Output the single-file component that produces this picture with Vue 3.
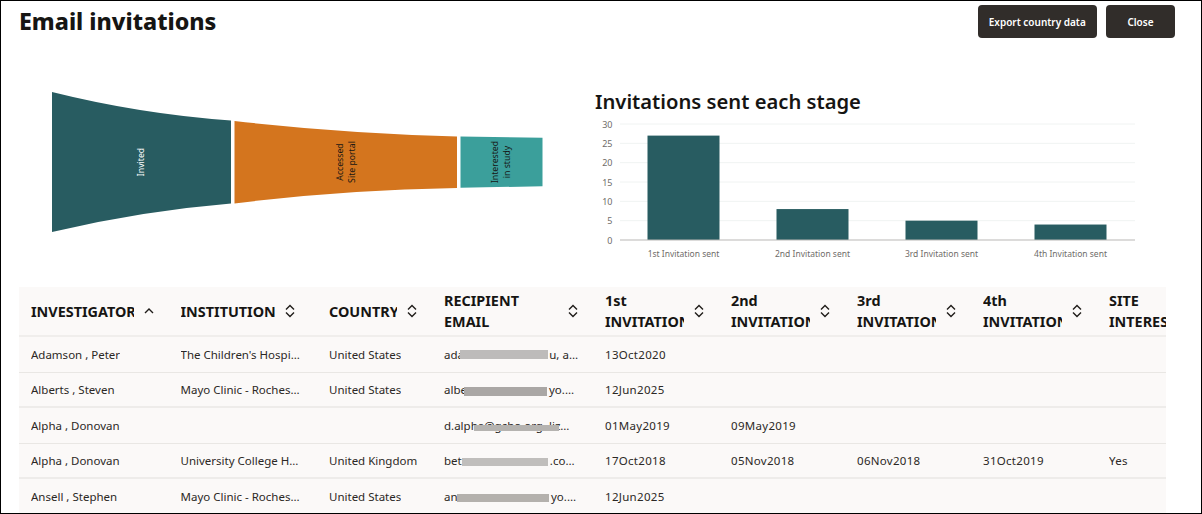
<script setup>
const columns = [
  { lines: ['INVESTIGATOR'], width: 149.5, sort: 'asc' },
  { lines: ['INSTITUTION'], width: 148.5, sort: 'both', wide: true },
  { lines: ['COUNTRY'], width: 115, sort: 'both' },
  { lines: ['RECIPIENT', 'EMAIL'], width: 161, sort: 'both' },
  { lines: ['1st', 'INVITATION'], width: 126, sort: 'both' },
  { lines: ['2nd', 'INVITATION'], width: 126, sort: 'both' },
  { lines: ['3rd', 'INVITATION'], width: 126, sort: 'both' },
  { lines: ['4th', 'INVITATION'], width: 126, sort: 'both' },
  { lines: ['SITE', 'INTEREST'], width: 100, sort: '' },
]
const rows = [
  { c: ['Adamson , Peter', "The Children's Hospital", 'United States', '', '13Oct2020', '', '', '', ''],
    email: { pre: 'ada', suf: 'u, a…', end: 134 }, mask: { from: 16, to: 104, top: 13, h: 9, color: '#bdbbba' } },
  { c: ['Alberts , Steven', 'Mayo Clinic - Rochester', 'United States', '', '12Jun2025', '', '', '', ''],
    email: { pre: 'albe', suf: 'yo.…', end: 130 }, mask: { from: 20, to: 102.500, top: 14.500, h: 9, color: '#aaa7a5' } },
  { c: ['Alpha , Donovan', '', '', '', '01May2019', '09May2019', '', '', ''],
    email: { pre: 'd.alpha@gcho.org, liz…', suf: '', end: 129 }, mask: { from: 30, to: 115, top: 17, h: 6, color: '#b5b3b0' } },
  { c: ['Alpha , Donovan', 'University College Hospital', 'United Kingdom', '', '17Oct2018', '05Nov2018', '06Nov2018', '31Oct2019', 'Yes'],
    email: { pre: 'bet', suf: '.co…', end: 130.500 }, mask: { from: 18, to: 104, top: 14, h: 8, color: '#c0bebc' } },
  { c: ['Ansell , Stephen', 'Mayo Clinic - Rochester', 'United States', '', '12Jun2025', '', '', '', ''],
    email: { pre: 'an', suf: 'yo.…', end: 132 }, mask: { from: 13, to: 105, top: 14.500, h: 8, color: '#b4b1ad' } },
]
const ticks = [30, 25, 20, 15, 10, 5, 0]
const bars = [
  { label: '1st Invitation sent', value: 27 },
  { label: '2nd Invitation sent', value: 8 },
  { label: '3rd Invitation sent', value: 5 },
  { label: '4th Invitation sent', value: 4 },
]
const yOf = (v) => 240 - (v / 30) * 116
</script>

<template>
  <div class="page">
    <header class="top">
      <h1>Email invitations</h1>
      <div class="actions">
        <button class="btn export">Export country data</button>
        <button class="btn close">Close</button>
      </div>
    </header>

    <section class="charts">
      <svg class="funnel" width="560" height="160" viewBox="0 80 560 160">
        <path d="M52 92 Q140 114 231 120.5 L231 203.5 Q140 211 52 232 Z" fill="#285c61" />
        <path d="M234.500 121 Q340 133 457 136.500 L457 188 Q340 190 234.500 203.500 Z" fill="#d4751e" />
        <path d="M460.500 136.500 L542.500 137.700 L542.500 186.300 L460.500 187.700 Z" fill="#3b9f9b" />
        <text class="fl white" transform="translate(144 162) rotate(-90)" text-anchor="middle">Invited</text>
        <text class="fl" transform="translate(342.500 162) rotate(-90)" text-anchor="middle">Accessed</text>
        <text class="fl" transform="translate(355 162) rotate(-90)" text-anchor="middle">Site portal</text>
        <text class="fl" transform="translate(498 162) rotate(-90)" text-anchor="middle">Interested</text>
        <text class="fl" transform="translate(510 162) rotate(-90)" text-anchor="middle">in study</text>
      </svg>

      <div class="bar-panel">
        <h2>Invitations sent each stage</h2>
        <svg class="bars" width="560" height="156" viewBox="590 114 560 156">
          <g v-for="t in ticks" :key="t">
            <line v-if="t" x1="620" x2="1135" :y1="yOf(t)" :y2="yOf(t)" stroke="#f0f3f2" stroke-width="1" />
            <text class="tick" x="612.500" :y="yOf(t) + 3.500" text-anchor="end">{{ t }}</text>
          </g>
          <g v-for="(b, i) in bars" :key="b.label">
            <rect :x="647.500 + i * 129" :y="yOf(b.value)" width="72" :height="240 - yOf(b.value)" fill="#285c61" />
            <text class="tick lab" :x="683.500 + i * 129" y="256.500" text-anchor="middle">{{ b.label }}</text>
          </g>
          <line x1="620" x2="1135" y1="240" y2="240" stroke="#b9b7b5" stroke-width="1" />
        </svg>
      </div>
    </section>

    <section class="table">
      <div class="row head">
        <div v-for="col in columns" :key="col.lines[0]" class="cell hcell" :class="{ wide: col.wide }" :style="{ width: col.width + 'px' }">
          <div class="htext"><span v-for="l in col.lines" :key="l">{{ l }}</span></div>
          <svg v-if="col.sort" class="sort" width="10" height="14" viewBox="0 0 10 14" fill="none" stroke="#1f1c1a" stroke-width="1.4">
            <path v-if="col.sort === 'asc'" d="M1 9 L5 5 L9 9" />
            <template v-else>
              <path d="M1 5.500 L5 1.500 L9 5.500" />
              <path d="M1 8.500 L5 12.500 L9 8.500" />
            </template>
          </svg>
        </div>
      </div>
      <div v-for="(r, i) in rows" :key="i" class="row body">
        <div v-for="(v, j) in r.c" :key="j" class="cell" :class="{ date: j >= 4, loose: j === 2 }" :style="{ width: columns[j].width + 'px' }">
          <span v-if="j !== 3" class="val">{{ v }}</span>
          <template v-else>
            <span class="email" :style="{ width: r.email.end + 'px' }">
              <span>{{ r.email.pre }}</span><span>{{ r.email.suf }}</span>
            </span>
            <i class="mask" :style="{ left: 12 + r.mask.from + 'px', width: r.mask.to - r.mask.from + 'px', top: r.mask.top + 'px', height: r.mask.h + 'px', background: r.mask.color }"></i>
          </template>
        </div>
      </div>
    </section>
  </div>
</template>

<style scoped>
.page {
  box-sizing: border-box;
  width: 1202px;
  height: 514px;
  border: 1px solid #000;
  background: #fff;
  color: #161513;
  font-family: "Noto Sans", sans-serif;
  overflow: hidden;
  padding: 4px 26px 0 18px;
}
.top {
  display: flex;
  justify-content: space-between;
  align-items: flex-start;
}
h1 {
  margin: 0;
  font-size: 23.200px;
  line-height: 32px;
  font-weight: 800;
}
.actions {
  display: flex;
  gap: 9px;
}
.btn {
  height: 33px;
  border: none;
  border-radius: 4px;
  background: #312d2a;
  color: #fff;
  font: 600 10px "Noto Sans", sans-serif;
  padding: 0;
}
.export { width: 119.500px; }
.close { width: 69px; }
.charts {
  display: flex;
  margin-top: 42px;
  height: 207px;
  margin-left: -18px;
}
.funnel {
  display: block;
  flex: none;
  margin-left: -1px;
}
.bar-panel {
  margin-left: 35px;
}
h2 {
  margin: 7px 0 0;
  font-size: 20.200px;
  line-height: 28px;
  font-weight: 600;
}
.bars { display: block; margin-left: -5px; margin-top: -1.500px; }
.tick {
  font: 9px "Noto Sans", sans-serif;
  fill: #6f6c69;
}
.lab { font-size: 8.500px; }
.fl {
  font: 8.700px "Noto Sans", sans-serif;
  fill: #161513;
}
.white { fill: #fff; }
.table {
  width: 1147px;
  overflow: hidden;
  background: #fbf9f8;
}
.row {
  display: flex;
  width: 1240px;
}
.head {
  height: 50px;
  border-bottom: 2px solid #f0eeec;
  box-sizing: border-box;
}
.body {
  height: 35.500px;
  box-sizing: border-box;
  border-bottom: 1px solid #e9e7e4;
}
.body:nth-child(odd) {
  border-bottom: 2px solid #eeecea;
}
.cell {
  position: relative;
  flex: none;
  box-sizing: border-box;
  padding: 0 14px 0 12px;
  display: flex;
  align-items: center;
  font-size: 11.500px;
  color: #2b2825;
  white-space: nowrap;
}
.cell.loose { padding-right: 8px; }
.date { letter-spacing: 0.3px; }
.val {
  overflow: hidden;
  text-overflow: ellipsis;
  min-width: 0;
}
.email {
  display: flex;
  justify-content: space-between;
  flex: none;
}
.hcell {
  font-size: 14.400px;
  font-weight: 700;
  line-height: 21px;
  color: #161513;
  padding-right: 0;
}
.htext {
  display: flex;
  flex-direction: column;
  overflow: hidden;
  min-width: 0;
  flex: 1;
}
.sort { flex: none; margin: 0 15px 0 10px; }
.wide .sort { margin-right: 22px; }
.mask {
  position: absolute;
}
</style>

<style>
html, body { margin: 0; background: #fff; }
</style>
